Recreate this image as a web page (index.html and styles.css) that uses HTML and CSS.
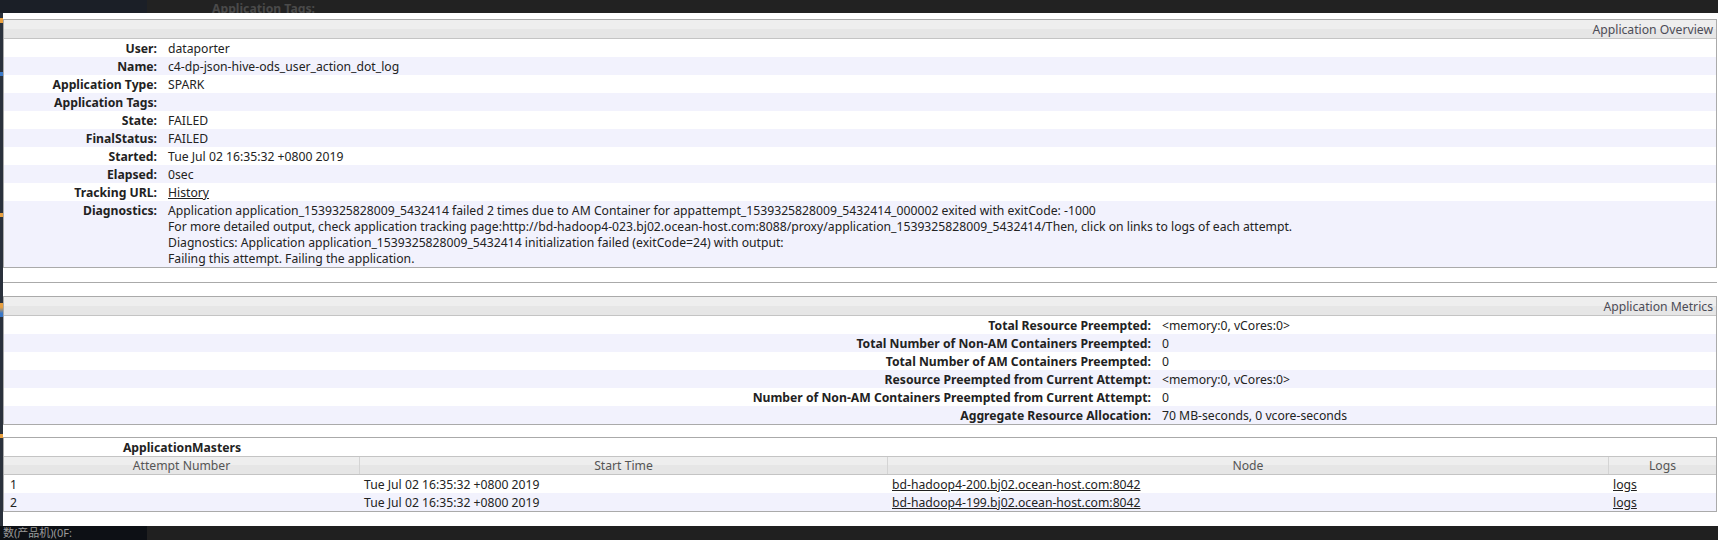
FILE: index.html
```html
<!DOCTYPE html>
<html lang="en">
<head>
<meta charset="utf-8">
<title>Application Overview</title>
<link rel="stylesheet" href="styles.css">
</head>
<body>
<div class="topbar">
  <div class="topbar-left"></div>
  <div class="topbar-ghost">Application Tags:</div>
</div>
<main class="content">
  <section class="panel overview">
    <div class="panel-hdr">Application Overview</div>
    <div class="kv"><div class="k">User:</div><div class="v">dataporter</div></div>
    <div class="kv odd"><div class="k">Name:</div><div class="v">c4-dp-json-hive-ods_user_action_dot_log</div></div>
    <div class="kv"><div class="k">Application Type:</div><div class="v">SPARK</div></div>
    <div class="kv odd"><div class="k">Application Tags:</div><div class="v"></div></div>
    <div class="kv"><div class="k">State:</div><div class="v">FAILED</div></div>
    <div class="kv odd"><div class="k">FinalStatus:</div><div class="v">FAILED</div></div>
    <div class="kv"><div class="k">Started:</div><div class="v">Tue Jul 02 16:35:32 +0800 2019</div></div>
    <div class="kv odd"><div class="k">Elapsed:</div><div class="v">0sec</div></div>
    <div class="kv"><div class="k">Tracking URL:</div><div class="v"><a href="#">History</a></div></div>
    <div class="kv odd diag"><div class="k">Diagnostics:</div><div class="v">Application application_1539325828009_5432414 failed 2 times due to AM Container for appattempt_1539325828009_5432414_000002 exited with exitCode: -1000<br>For more detailed output, check application tracking page:http://bd-hadoop4-023.bj02.ocean-host.com:8088/proxy/application_1539325828009_5432414/Then, click on links to logs of each attempt.<br>Diagnostics: Application application_1539325828009_5432414 initialization failed (exitCode=24) with output:<br>Failing this attempt. Failing the application.</div></div>
  </section>

  <div class="sep"></div>

  <section class="panel metrics">
    <div class="panel-hdr">Application Metrics</div>
    <div class="kv"><div class="k">Total Resource Preempted:</div><div class="v">&lt;memory:0, vCores:0&gt;</div></div>
    <div class="kv odd"><div class="k">Total Number of Non-AM Containers Preempted:</div><div class="v">0</div></div>
    <div class="kv"><div class="k">Total Number of AM Containers Preempted:</div><div class="v">0</div></div>
    <div class="kv odd"><div class="k">Resource Preempted from Current Attempt:</div><div class="v">&lt;memory:0, vCores:0&gt;</div></div>
    <div class="kv"><div class="k">Number of Non-AM Containers Preempted from Current Attempt:</div><div class="v">0</div></div>
    <div class="kv odd"><div class="k">Aggregate Resource Allocation:</div><div class="v">70 MB-seconds, 0 vcore-seconds</div></div>
  </section>

  <section class="panel masters">
    <div class="caption"><div class="caption-text">ApplicationMasters</div></div>
    <div class="grid-row head">
      <div class="hc">Attempt Number</div>
      <div class="hc">Start Time</div>
      <div class="hc">Node</div>
      <div class="hc">Logs</div>
    </div>
    <div class="grid-row">
      <div class="dc">1</div>
      <div class="dc">Tue Jul 02 16:35:32 +0800 2019</div>
      <div class="dc"><a href="#">bd-hadoop4-200.bj02.ocean-host.com:8042</a></div>
      <div class="dc"><a href="#">logs</a></div>
    </div>
    <div class="grid-row odd">
      <div class="dc">2</div>
      <div class="dc">Tue Jul 02 16:35:32 +0800 2019</div>
      <div class="dc"><a href="#">bd-hadoop4-199.bj02.ocean-host.com:8042</a></div>
      <div class="dc"><a href="#">logs</a></div>
    </div>
  </section>
</main>
<div class="bottombar">
  <div class="bottombar-left">数(产品机)(0F:</div>
</div>
</body>
</html>
```

FILE: styles.css
```css
* { box-sizing: border-box; }
html, body { margin: 0; padding: 0; background: #fff; }
body {
  width: 1718px;
  height: 540px;
  overflow: hidden;
  font-family: "Noto Sans", "Open Sans", "Noto Sans CJK SC", sans-serif;
  font-size: 12.2px;
  color: #222;
}
a { color: #222; text-decoration: underline; }

.topbar {
  height: 13px;
  background: #222;
  display: flex;
  overflow: hidden;
}
.topbar-left { width: 147px; flex: none; background: #1b1f27; }
.topbar-ghost {
  padding-left: 65px;
  padding-top: 1px;
  line-height: 16px;
  font-weight: bold;
  color: #4a4a4a;
  white-space: nowrap;
}

.content {
  height: 513px;
  overflow: hidden;
  padding: 6px 1px 0 0;
  border-left: 3px solid #2a313c;
  border-image: linear-gradient(#2a313c 0 6px, #e8a040 6px 11px, #2a313c 11px 60px, #3a78c8 60px 64px, #2a313c 64px 200px, #e8a040 200px 204px, #2a313c 204px 290px, #e8a040 290px 294px, #3a78c8 300px 304px, #2a313c 304px 420px, #e8a040 420px 424px, #2a313c 424px) 1;
}

.panel { border: 1px solid #aaa; background: #fff; }
.panel-hdr {
  height: 19px;
  line-height: 16px;
  padding: 2px 3px 0;
  text-align: right;
  color: #4c4c56;
  background: linear-gradient(#eeeeee 0 50%, #e6e6e6 50% 100%);
  border-bottom: 1px solid #c4c4c4;
}

.kv { display: grid; line-height: 16px; padding: 2px 0 0; }
.kv.odd { background: #f2f2fd; }
.overview .kv { grid-template-columns: 158px 1fr; }
.metrics .kv { grid-template-columns: 1152px 1fr; }
.k { text-align: right; font-weight: bold; padding-right: 5px; white-space: nowrap; }
.v { padding-left: 6px; white-space: nowrap; }
.kv.diag { padding: 2px 0 0; }

.sep { margin: 14px 0 13px; border-top: 1px solid #aaa; }
.masters { margin-top: 12px; }

.caption { height: 18px; line-height: 16px; padding-top: 2px; }
.caption-text { width: 356px; text-align: center; font-weight: bold; }

.grid-row { display: grid; grid-template-columns: 355px 528px 721px 1fr; }
.grid-row.head {
  border-top: 1px solid #c4c4c4;
  border-bottom: 1px solid #c4c4c4;
  background: linear-gradient(#eeeeee 0 50%, #e6e6e6 50% 100%);
  height: 19px;
  line-height: 17px;
}
.hc { text-align: center; color: #555; }
.hc + .hc { border-left: 1px solid #d4d4d4; }
.grid-row .dc { line-height: 16px; height: 18px; padding: 2px 0 0 5px; white-space: nowrap; }
.grid-row .dc:first-child { padding-left: 6px; }
.grid-row.odd { background: #f2f2fd; }

.bottombar {
  height: 14px;
  background: #202020;
  display: flex;
  overflow: hidden;
}
.bottombar-left {
  width: 147px;
  flex: none;
  background: #0d1015;
  color: #9a9a9a;
  font-size: 11px;
  line-height: 14px;
  padding-left: 3px;
  white-space: nowrap;
  overflow: hidden;
}
```
